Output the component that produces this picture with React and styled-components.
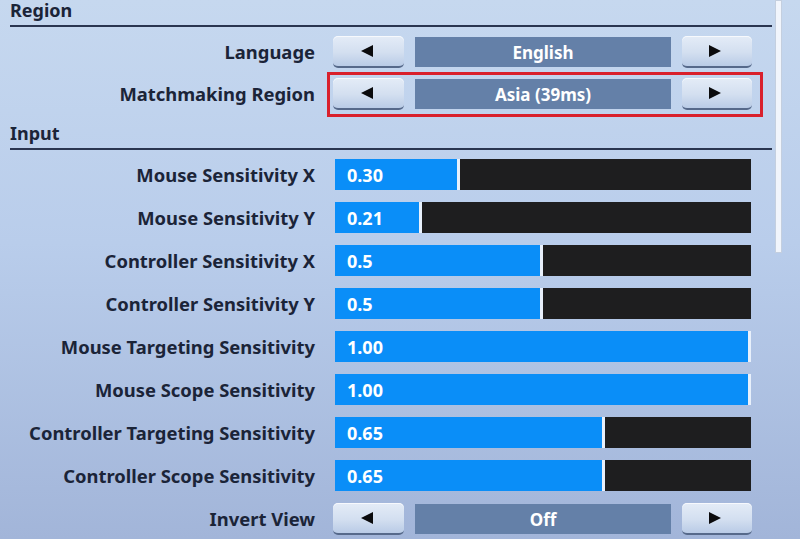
import styled, { createGlobalStyle } from "styled-components";

const GlobalStyle = createGlobalStyle`
  html, body {
    margin: 0;
    padding: 0;
  }
  body {
    width: 800px;
    height: 539px;
    overflow: hidden;
    font-family: "Noto Sans", "Open Sans", sans-serif;
    background: linear-gradient(180deg, #c6d8ef 0%, #b9cdeb 45%, #a2b5d9 100%);
  }
`;

const regionRows = [
  { label: "Language", value: "English" },
  { label: "Matchmaking Region", value: "Asia (39ms)", highlighted: true },
];

const sliderRows = [
  { label: "Mouse Sensitivity X", value: "0.30", amount: 0.3 },
  { label: "Mouse Sensitivity Y", value: "0.21", amount: 0.21 },
  { label: "Controller Sensitivity X", value: "0.5", amount: 0.5 },
  { label: "Controller Sensitivity Y", value: "0.5", amount: 0.5 },
  { label: "Mouse Targeting Sensitivity", value: "1.00", amount: 1 },
  { label: "Mouse Scope Sensitivity", value: "1.00", amount: 1 },
  { label: "Controller Targeting Sensitivity", value: "0.65", amount: 0.65 },
  { label: "Controller Scope Sensitivity", value: "0.65", amount: 0.65 },
];

const Arrow = ({ dir }) => (
  <svg width="12" height="12" viewBox="0 0 12 12">
    {dir === "left" ? (
      <polygon points="12,0 12,12 0,6" fill="#0b0b0d" />
    ) : (
      <polygon points="0,0 0,12 12,6" fill="#0b0b0d" />
    )}
  </svg>
);

const Selector = ({ value, highlighted }) => (
  <SelectorGroup $highlighted={highlighted}>
    <ArrowButton>
      <Arrow dir="left" />
    </ArrowButton>
    <SelectorValue>{value}</SelectorValue>
    <ArrowButton>
      <Arrow dir="right" />
    </ArrowButton>
  </SelectorGroup>
);

const Slider = ({ value, amount }) => (
  <SliderTrack>
    <SliderFill style={{ width: `${amount * 100}%` }}>
      <SliderValue>{value}</SliderValue>
    </SliderFill>
  </SliderTrack>
);

const App = () => {
  return (
    <>
      <GlobalStyle />
      <Page>
        <Content>
          <SectionTitle>Region</SectionTitle>
          <RowList $gap={10}>
            {regionRows.map((row) => (
              <Row key={row.label}>
                <Label>{row.label}</Label>
                <Selector value={row.value} highlighted={row.highlighted} />
              </Row>
            ))}
          </RowList>

          <SectionTitle $spaced>Input</SectionTitle>
          <RowList $gap={11}>
            {sliderRows.map((row) => (
              <Row key={row.label}>
                <Label>{row.label}</Label>
                <Slider value={row.value} amount={row.amount} />
              </Row>
            ))}
            <Row>
              <Label>Invert View</Label>
              <Selector value="Off" />
            </Row>
          </RowList>
        </Content>
        <ScrollTrack>
          <ScrollThumb />
        </ScrollTrack>
      </Page>
    </>
  );
};
export default App;

// Styled components

const Page = styled.div`
  display: flex;
  align-items: flex-start;
  width: 800px;
  height: 539px;
`;

const Content = styled.div`
  width: 762px;
  margin-left: 10px;
  display: flex;
  flex-direction: column;
`;

const SectionTitle = styled.div`
  font-size: 18px;
  font-weight: 700;
  line-height: 18px;
  color: #1b2438;
  padding-top: 1px;
  padding-bottom: 6px;
  border-bottom: 2px solid #2a3550;
  margin-top: ${(p) => (p.$spaced ? "13px" : "0")};
`;

const RowList = styled.div`
  display: flex;
  flex-direction: column;
  gap: ${(p) => p.$gap}px;
  margin-top: 9px;
`;

const Row = styled.div`
  display: grid;
  grid-template-columns: 305px 419px;
  column-gap: 18px;
  align-items: center;
  height: 32px;
`;

const Label = styled.div`
  text-align: right;
  font-size: 18.4px;
  font-weight: 700;
  color: #1b2438;
  white-space: nowrap;
  padding-bottom: 2px;
`;

const SelectorGroup = styled.div`
  position: relative;
  display: grid;
  grid-template-columns: 71px 1fr 70px;
  column-gap: 11px;
  align-items: center;
  height: 32px;

  ${(p) =>
    p.$highlighted &&
    `
    &::after {
      content: "";
      position: absolute;
      left: -6px;
      right: -11px;
      top: -6px;
      bottom: -7px;
      border: 3px solid #d9202c;
      pointer-events: none;
    }
  `}
`;

const ArrowButton = styled.div`
  height: 32px;
  box-sizing: border-box;
  border-radius: 5px;
  background: linear-gradient(180deg, #e4ecf7 0%, #d3dff0 55%, #b9cbe6 100%);
  border-bottom: 2px solid #56698a;
  box-shadow: inset 0 1px 0 rgba(255, 255, 255, 0.7);
  display: flex;
  align-items: center;
  justify-content: center;
  padding-right: 4px;
`;

const SelectorValue = styled.div`
  height: 30px;
  background: #6480a8;
  color: #ffffff;
  font-size: 17px;
  font-weight: 700;
  display: flex;
  align-items: center;
  justify-content: center;
`;

const SliderTrack = styled.div`
  height: 31px;
  width: 416px;
  margin-left: 2px;
  align-self: start;
  background: #1e1e1f;
  display: flex;
`;

const SliderFill = styled.div`
  height: 100%;
  box-sizing: border-box;
  background: #0a8ef8;
  border-right: 3px solid #e8f0fb;
  display: flex;
  align-items: center;
`;

const SliderValue = styled.span`
  padding-left: 12px;
  color: #ffffff;
  font-size: 18px;
  font-weight: 700;
`;

const ScrollTrack = styled.div`
  margin-left: 3px;
  width: 8px;
  height: 539px;
`;

const ScrollThumb = styled.div`
  width: 7px;
  height: 253px;
  background: #f1f5fc;
  border: 1px solid #c4cfdf;
  box-sizing: border-box;
`;
